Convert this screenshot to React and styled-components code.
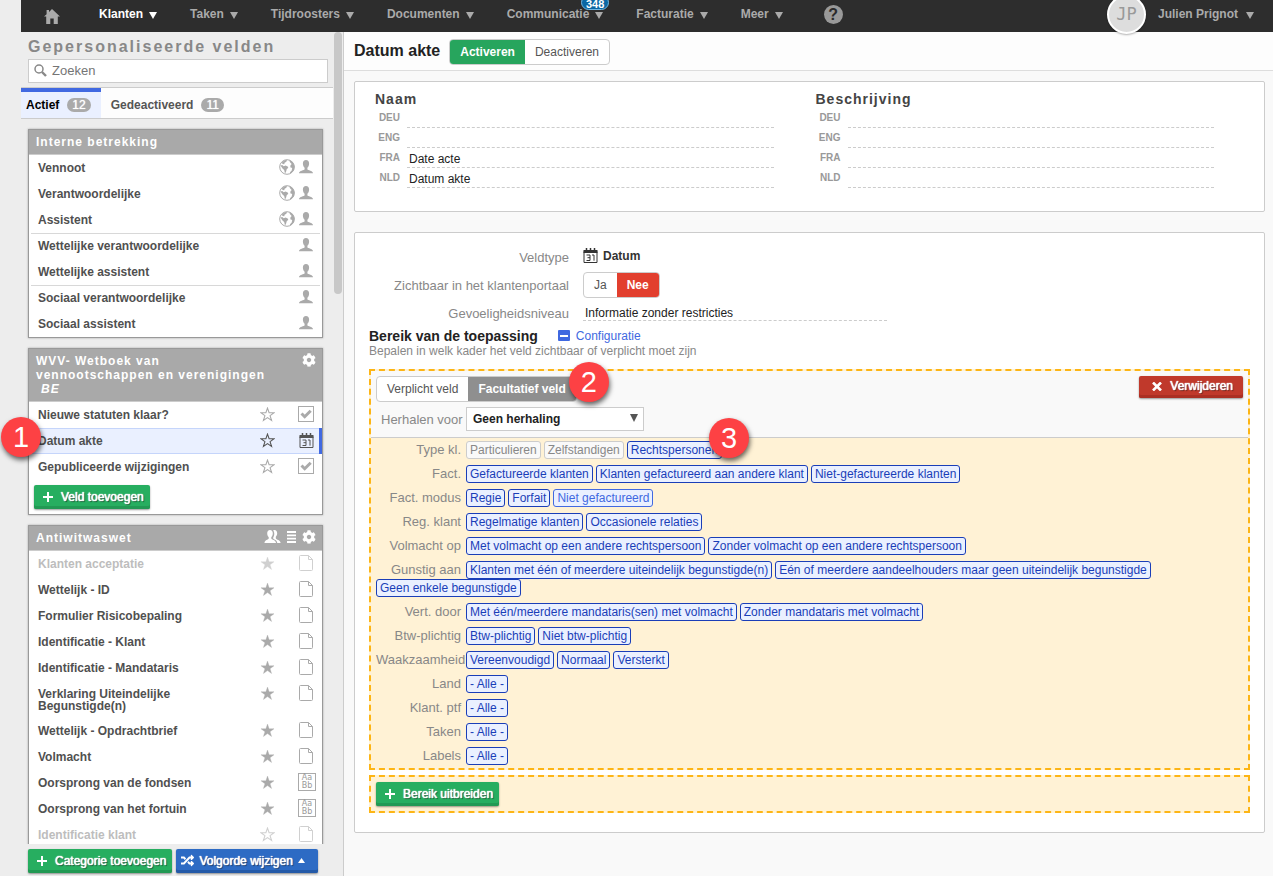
import React, { useState } from 'react';
import styled, { createGlobalStyle } from 'styled-components';
import { FaCog, FaRandom } from 'react-icons/fa';

const GlobalStyle = createGlobalStyle`
  * {
    box-sizing: border-box;
  }

  body {
    margin: 0;
    background: #ededed;
    color: #333;
    font-family: 'Liberation Sans', Arial, sans-serif;
    font-size: 12px;
  }

  button, input, select {
    font-family: inherit;
    font-size: inherit;
  }

  ul {
    margin: 0;
    padding: 0;
    list-style: none;
  }

  svg {
    display: block;
    flex: none;
  }
`;

/* ---------- layout ---------- */

const Page = styled.div`
  display: flex;
  flex-direction: column;
  height: 100vh;
`;

const Columns = styled.div`
  display: flex;
  flex: 1;
  min-height: 0;
`;

/* ---------- top navigation ---------- */

const TopBar = styled.nav`
  display: flex;
  align-items: center;
  height: 32px;
  margin-left: 21px;
  padding: 0 19px 4px 23px;
  background: #2d2d2d;
  color: #aaa;
`;

const HomeLink = styled.a`
  margin: 4px 39px 0 0;
  color: #aaa;
`;

const NavList = styled.ul`
  display: flex;
  gap: 33px;
`;

const NavLink = styled.a`
  position: relative;
  display: flex;
  align-items: center;
  gap: 6px;
  color: ${props => (props.$active ? '#fff' : '#aaa')};
  font-weight: bold;
  line-height: 16px;
  text-decoration: none;
`;

const Caret = styled.span`
  width: 0;
  height: 0;
  margin-top: 2px;
  border: 4px solid transparent;
  border-top: 7px solid currentColor;
  border-bottom: 0;
`;

const NavCount = styled.span`
  position: absolute;
  top: -11px;
  right: -6px;
  height: 15px;
  padding: 3px 4px 0;
  border: 1px solid #6fb6e2;
  border-radius: 8px;
  background: #0a67a3;
  color: #fff;
  font-size: 11px;
  line-height: 10px;
`;

const HelpButton = styled.button`
  width: 19px;
  height: 19px;
  margin-left: 41px;
  padding: 0;
  border: 0;
  border-radius: 50%;
  background: #999;
  color: #2b2b2b;
  font-size: 16px;
  font-weight: bold;
  line-height: 19px;
`;

const UserMenu = styled.div`
  display: flex;
  align-items: center;
  gap: 12px;
  margin-left: auto;
`;

const Avatar = styled.div`
  width: 39px;
  height: 39px;
  border: 2px solid #fff;
  border-radius: 50%;
  background: #ddd;
  color: #999;
  box-shadow: 0 1px 2px rgba(0, 0, 0, 0.3);
  font-family: 'DejaVu Sans Mono', monospace;
  font-size: 17px;
  line-height: 35px;
  text-align: center;
  z-index: 2;
`;

const UserLink = styled(NavLink)`
  gap: 8px;
`;

/* ---------- sidebar ---------- */

const Sidebar = styled.aside`
  display: flex;
  flex: 0 0 344px;
  border-right: 1px solid #ccc;
`;

const SidebarBody = styled.div`
  display: flex;
  flex: 1;
  flex-direction: column;
  min-width: 0;
`;

const ScrollThumb = styled.div`
  width: 8px;
  height: 31%;
  margin: 0 1px;
  border-radius: 4px;
  background: #c8c8c8;
`;

const SidebarTitle = styled.h1`
  margin: 5px 0 2px 28px;
  color: #888;
  font-size: 16px;
  letter-spacing: 2px;
  line-height: 20px;
`;

const SearchBox = styled.label`
  display: flex;
  align-items: center;
  gap: 5px;
  height: 24px;
  margin: 0 5px 4px 28px;
  padding: 0 5px 2px;
  border: 1px solid #ccc;
  background: #fff;
  color: #888;
`;

const SearchInput = styled.input`
  flex: 1;
  min-width: 0;
  padding: 0;
  border: 0;
  outline: 0;
  font-size: 13px;

  &::placeholder {
    color: #757575;
  }
`;

const TabBar = styled.div`
  display: flex;
  height: 32px;
  margin-left: 21px;
  border: 1px solid #ccc;
  border-width: 1px 0;
  background: #fdfdfd;
`;

const Tab = styled.button`
  display: flex;
  align-items: center;
  gap: 8px;
  padding: ${props => (props.$active ? '0 10px 0 5px' : '4px 10px 0')};
  border: 0;
  border-top: ${props => (props.$active ? '4px solid #4169e1' : '0')};
  background: ${props => (props.$active ? '#eaf0ff' : 'transparent')};
  color: ${props => (props.$active ? '#000' : '#555')};
  font-weight: bold;
`;

const TabCount = styled.span`
  padding: 0 5px;
  border-radius: 7px;
  background: #aaa;
  color: #fff;
  font-weight: normal;
  line-height: 14px;
  text-shadow: 0 0 1px #fff;
`;

const PanelList = styled.div`
  display: flex;
  flex: 1;
  flex-direction: column;
  gap: 10px;
  min-height: 0;
  padding: 10px 10px 0 28px;
  overflow: hidden;
`;

const Panel = styled.section`
  flex: none;
  border: 1px solid #999;
  background: #fff;
  box-shadow: 0 0 2px rgba(0, 0, 0, 0.3);
`;

const PanelHeader = styled.header`
  display: flex;
  justify-content: space-between;
  padding: 5px 6px 5px 7px;
  border-bottom: 1px solid #ccc;
  background: #a9a9a9;
  color: #fff;
`;

const PanelTitle = styled.h2`
  max-width: 236px;
  margin: 0;
  font-size: 12px;
  letter-spacing: 1px;
  line-height: 14px;

  em {
    display: block;
    padding-left: 5px;
  }
`;

const PanelTools = styled.div`
  display: flex;
  align-items: center;
  align-self: flex-start;
  gap: 6px;
  height: 12px;
`;

const Row = styled.li`
  position: relative;
  display: flex;
  align-items: flex-start;
  min-height: 26px;
  padding: 7px 8px 6px 9px;
  background: ${props =>
    props.$selected
      ? '#eaf0ff'
      : props.$divided
        ? 'linear-gradient(#d8d8d8, #d8d8d8) center top / calc(100% - 4px) 1px no-repeat'
        : 'none'};
  box-shadow: ${props =>
    props.$selected
      ? 'inset -3px 0 #4169e1, inset 0 1px #c5d5fb, inset 0 -1px #c5d5fb'
      : 'none'};
  color: ${props => (props.$selected ? '#555' : '#aaa')};
  opacity: ${props => (props.$muted ? 0.55 : 1)};
`;

const RowLink = styled.a`
  flex: 1;
  color: ${props => (props.$muted ? '#888' : '#505050')};
  font-weight: bold;
  line-height: 12px;
  text-decoration: none;
`;

const StarSlot = styled.span`
  display: flex;
  align-items: center;
  justify-content: center;
  width: 18px;
  height: 11px;
  margin-right: 22px;
`;

const TypeSlot = styled.span`
  display: flex;
  align-items: center;
  justify-content: flex-end;
  gap: 3px;
  height: 10px;
  min-width: 16px;
`;

const TextGlyph = styled.span`
  width: 18px;
  height: 18px;
  margin-right: -2px;
  border: 1px solid #aaa;
  color: #999;
  font-family: 'DejaVu Sans', sans-serif;
  font-size: 8px;
  line-height: 8px;
  text-align: center;
`;

const PanelActions = styled.div`
  padding: 5px;
`;

const SidebarFooter = styled.footer`
  display: flex;
  gap: 4px;
  padding: 5px 0 3px 28px;
`;

/* ---------- shared controls ---------- */

const tones = {
  green: ['#27ae60', '#229954'],
  blue: ['#2d6bc4', '#245aa8'],
  red: ['#c0392b', '#ab2f23'],
};

const buttonSizes = {
  regular: { height: '24px', padding: '0 6px 1px 9px', gap: '8px' },
  small: { height: '22px', padding: '0 10px 2px 13px', gap: '8px' },
  menu: { height: '24px', padding: '0 13px 1px 5px', gap: '5px' },
};

const ActionButton = styled.button`
  display: inline-flex;
  align-items: center;
  gap: ${props => buttonSizes[props.$size || 'regular'].gap};
  height: ${props => buttonSizes[props.$size || 'regular'].height};
  padding: ${props => buttonSizes[props.$size || 'regular'].padding};
  border: 0;
  border-radius: 2px;
  background: ${props => tones[props.$tone][0]};
  box-shadow: inset 0 -3px ${props => tones[props.$tone][1]}, 0 1px 2px rgba(0, 0, 0, 0.4);
  color: #fff;
  text-shadow: 0 0 1px #fff, 0 0 1px #fff, 1px 1px 1px rgba(0, 0, 0, 0.6);
  white-space: nowrap;
`;

const ToggleGroup = styled.div`
  position: relative;
  display: inline-flex;
  height: 26px;
  border: 1px solid #ccc;
  border-radius: 4px;
  background: #fff;
`;

const toggleTones = {
  green: '#27a55d',
  red: '#e23f2e',
  gray: '#8f8f8f',
};

const ToggleButton = styled.button`
  padding: 0 10px;
  border: 0;
  border-radius: ${props => (props.$last ? '0 3px 3px 0' : '3px 0 0 3px')};
  background: ${props => toggleTones[props.$tone] || 'transparent'};
  color: ${props => (props.$tone ? '#fff' : '#555')};
  font-weight: ${props => (props.$tone ? 'bold' : 'normal')};
`;

const Callout = styled.span`
  position: absolute;
  top: ${props => props.$top};
  left: ${props => props.$left};
  right: ${props => props.$right};
  z-index: 3;
  width: 40px;
  height: 40px;
  border-radius: 50%;
  background: #fd4144;
  box-shadow: 1px 3px 5px rgba(0, 0, 0, 0.6);
  color: #fff;
  font-size: 29px;
  font-weight: normal;
  line-height: 40px;
  text-align: center;
`;

/* ---------- main area ---------- */

const Main = styled.main`
  flex: 1;
  min-width: 0;
  background: #f9f9f9;
`;

const MainHeader = styled.header`
  display: flex;
  align-items: center;
  gap: 9px;
  height: 39px;
  padding: 2px 10px 0;
  border-bottom: 1px solid #ddd;
  background: #fdfdfd;
`;

const MainTitle = styled.h2`
  margin: 0;
  padding-bottom: 3px;
  color: #222;
  font-size: 16px;
  line-height: 20px;
`;

const Cards = styled.div`
  display: flex;
  flex-direction: column;
  gap: 20px;
  padding: 10px 8px 0 10px;
`;

const Card = styled.section`
  border: 1px solid #ccc;
  border-radius: 2px;
  background: #fff;
`;

const Translations = styled(Card)`
  display: flex;
  padding: 8px 8px 23px 20px;
`;

const LanguageColumn = styled.div`
  flex: 1;
  padding-right: 42px;
`;

const ColumnTitle = styled.h3`
  margin: 0;
  color: #444;
  font-size: 14px;
  letter-spacing: 1px;
  line-height: 18px;
`;

const LanguageRow = styled.label`
  display: flex;
  height: 20px;
  color: #999;
  font-size: 10px;
  font-weight: bold;
  line-height: 20px;

  span {
    width: 25px;
    margin-right: 7px;
    text-align: right;
  }
`;

const LanguageInput = styled.input`
  flex: 1;
  min-width: 0;
  padding: 2px 2px 0;
  border: 0;
  border-bottom: 1px dashed #ccc;
  outline: 0;
  background: transparent;
  color: #222;
  font-size: 12px;
`;

const Settings = styled(Card)`
  padding: 10px 14px 19px;
`;

const Field = styled.div`
  display: grid;
  grid-template-columns: 200px 1fr;
  align-items: center;
  column-gap: 14px;
  height: 28px;
`;

const FieldLabel = styled.span`
  color: #888;
  font-size: 13px;
  text-align: right;
`;

const TypeValue = styled.strong`
  display: flex;
  align-items: center;
  gap: 5px;
  padding-bottom: 3px;
`;

const LevelInput = styled.input`
  width: 304px;
  height: 16px;
  padding: 0 2px;
  border: 0;
  border-bottom: 1px dashed #ccc;
  outline: 0;
  color: #222;
`;

const ScopeHeading = styled.div`
  display: flex;
  align-items: center;
  gap: 20px;
  height: 18px;
`;

const ScopeTitle = styled.h3`
  margin: 0;
  color: #222;
  font-size: 14px;
`;

const ConfigLink = styled.a`
  display: flex;
  align-items: center;
  gap: 6px;
  color: #4169e1;
  text-decoration: none;
`;

const ScopeHint = styled.p`
  margin: 0 0 12px;
  color: #888;
  line-height: 12px;
`;

const ScopeBox = styled.div`
  margin-bottom: ${props => (props.$last ? 0 : '5px')};
  padding: ${props => (props.$last ? '5px' : 0)};
  border: 2px dashed #fdb515;
  background: #fff2d5;
`;

const ScopeToolbar = styled.div`
  display: flex;
  align-items: flex-start;
  justify-content: space-between;
  padding: 5px 5px 6px;
  border-bottom: 1px solid #ccc;
  background: #f9f9f9;
`;

const RepeatField = styled.div`
  display: flex;
  align-items: center;
  gap: 3px;
  margin-top: 5px;
  padding-left: 5px;

  label {
    min-width: 82px;
    color: #888;
    font-size: 13px;
  }
`;

const SelectWrap = styled.div`
  position: relative;
  display: flex;
  align-items: center;
  color: #555;

  &::after {
    content: '';
    position: absolute;
    top: 7px;
    right: 6px;
    border: 4px solid transparent;
    border-top: 8px solid currentColor;
    border-bottom: 0;
    pointer-events: none;
  }
`;

const Select = styled.select`
  width: 178px;
  height: 24px;
  padding: 0 6px;
  border: 1px solid #ccc;
  appearance: none;
  background: #fff;
  color: #222;
  font-weight: bold;
`;

const Criterion = styled.div`
  display: flex;
  flex-wrap: wrap;
  gap: 0 3px;
  padding: 3px 5px;
`;

const CriterionLabel = styled.span`
  width: 85px;
  margin-right: 2px;
  color: #888;
  font-size: 13px;
  line-height: 18px;
  text-align: right;
  white-space: nowrap;
`;

const tagColors = {
  on: ['#1a3eb8', '#eaf0ff'],
  soft: ['#4169e1', '#eaf0ff'],
  off: ['#888', '#f9f9f9'],
};

const Tag = styled.button`
  position: relative;
  height: 18px;
  padding: 0 3px;
  border: 1px solid ${props => (props.$state === 'off' ? '#ccc' : tagColors[props.$state][0])};
  border-radius: 3px;
  background: ${props => tagColors[props.$state][1]};
  color: ${props => tagColors[props.$state][0]};
  line-height: 16px;
`;

/* ---------- icons ---------- */

const HomeIcon = () => (
  <svg width="16" height="15" viewBox="0 0 16 15" fill="currentColor">
    <path d="M8 0 5 2.900V1H2.600v4.200L0 7.600h2.200V15h4.100V9.600h3.400V15h4.100V7.600H16z" />
  </svg>
);

const SearchIcon = () => (
  <svg width="13" height="13" viewBox="0 0 13 13" fill="none" stroke="currentColor">
    <circle cx="5" cy="5" r="4" strokeWidth="1.5" />
    <path d="m8 8 4 4" strokeWidth="2.4" />
  </svg>
);

const GlobeIcon = () => (
  <svg width="16" height="16" viewBox="0 0 16 16">
    <circle cx="8" cy="8" r="7.3" fill="#fff" stroke="currentColor" />
    <path
      fill="currentColor"
      d="M1.500 6.500 3.200 6l1.500 1.200 1.900-.6L9 7.800 9.200 9 7.800 10l-.6 2.200L6 14.800 5.200 11 3.500 9.500zM3 3.200 5.800 1.200 8 1l-.8 2-1.400.4-.6 1.800L3.400 5zM10 .9l3.700 2.200L15.600 7l-.6 4-3.400 3.400-.8-.8 1.900-2.200.5-2.400-1.900-.8.200-2L12.700 5 11 3.300z"
    />
  </svg>
);

const PersonIcon = () => (
  <svg width="16" height="14" viewBox="0 0 16 14" fill="currentColor">
    <path d="M8 0C6 0 4.900 1.400 4.900 3.500c0 1.900.7 3.300 1.700 4.200v1.500C6.400 10.400 1 10.500 1 13.200h14c0-2.700-5.400-2.800-5.600-4V7.700c1-.9 1.700-2.300 1.700-4.200C11.100 1.400 10 0 8 0z" />
  </svg>
);

const StarIcon = ({ filled }) => (
  <svg width="15" height="15" viewBox="0 0 14 14" stroke="currentColor" fill={filled ? 'currentColor' : 'none'}>
    <path
      strokeWidth={filled ? 0.3 : 1}
      d="m7 1 1.500 4.400h4.600L9.400 8.100l1.400 4.500L7 9.900l-3.800 2.700 1.400-4.500L.9 5.400h4.600z"
    />
  </svg>
);

const CheckIcon = () => (
  <svg width="16" height="16" viewBox="0 0 16 16" fill="none" stroke="currentColor">
    <rect x="0.5" y="0.5" width="15" height="15" />
    <path d="m3.500 7.500 3.200 3.200 6-6" strokeWidth="3" />
  </svg>
);

const CalendarIcon = () => (
  <svg width="15" height="15" viewBox="0 0 15 15" fill="none" stroke="currentColor">
    <path d="M1 3.500h13v11H1z" />
    <path d="M.5 3.500h14" strokeWidth="3" />
    <path d="M3.500 0v3M7.500 0v3M11.500 0v3" strokeWidth="1.5" />
    <path d="M3.500 7h3.500v5.500H3.500M4.500 9.700H7M9 7h2v5.700" />
  </svg>
);

const FileIcon = () => (
  <svg width="16" height="16" viewBox="0 0 16 16" fill="none" stroke="currentColor">
    <path d="M2.500.5h8l4 4v10a1 1 0 0 1-1 1h-11a1 1 0 0 1-1-1v-13a1 1 0 0 1 1-1zM10.500.5v4h4" />
  </svg>
);

const GroupIcon = () => (
  <svg width="17" height="14" viewBox="0 0 17 14" fill="currentColor">
    <path d="M6 0C4.200 0 3.200 1.300 3.200 3.200c0 1.700.6 3 1.500 3.900v1.500C4.500 10 .5 10 .5 13H12c0-3-4.500-3-4.700-4.400V7.100c.9-.9 1.500-2.200 1.500-3.900C8.800 1.300 7.800 0 6 0z" />
    <path d="M9.200.3c2.500-.8 4 .6 4 3 0 1.600-.6 2.700-1.400 3.500v1.400c.3 1.600 4.800 1.600 4.800 4.800h-3.400c0-2.700-3.300-3.300-4-4.400V7.400c1.400-2 1.500-4.800 0-7.100z" />
  </svg>
);

const ListIcon = () => (
  <svg width="9" height="12" viewBox="0 0 9 12" stroke="currentColor" strokeWidth="1.8">
    <path d="M0 1h9M0 4.300h9M0 7.600h9M0 11h9" />
  </svg>
);

const PlusIcon = () => (
  <svg width="10" height="10" viewBox="0 0 10 10" stroke="currentColor" strokeWidth="2">
    <path d="M5 0v10M0 5h10" />
  </svg>
);

const CrossIcon = () => (
  <svg width="10" height="9" viewBox="0 0 10 9" stroke="currentColor" strokeWidth="2.6">
    <path d="m1 .5 8 8M9 .5l-8 8" />
  </svg>
);

const UpIcon = () => (
  <svg width="7" height="5" viewBox="0 0 7 5" fill="currentColor">
    <path d="M3.500 0 7 5H0z" />
  </svg>
);

const MinusBoxIcon = () => (
  <svg width="12" height="12" viewBox="0 0 12 12">
    <rect width="12" height="11" rx="1" fill="#3f68e0" />
    <path d="M2 6h8" stroke="#fff" strokeWidth="2" />
  </svg>
);

/* ---------- data ---------- */

const navItems = ['Klanten', 'Taken', 'Tijdroosters', 'Documenten', 'Communicatie', 'Facturatie', 'Meer'];

const relations = [
  { name: 'Vennoot', globe: true },
  { name: 'Verantwoordelijke', globe: true },
  { name: 'Assistent', globe: true },
  { name: 'Wettelijke verantwoordelijke', divided: true },
  { name: 'Wettelijke assistent' },
  { name: 'Sociaal verantwoordelijke', divided: true },
  { name: 'Sociaal assistent' },
];

const wvvFields = [
  { name: 'Nieuwe statuten klaar?', type: 'check' },
  { name: 'Datum akte', type: 'date', callout: 1 },
  { name: 'Gepubliceerde wijzigingen', type: 'check' },
];

const amlFields = [
  { name: 'Klanten acceptatie', type: 'file', star: true, muted: true },
  { name: 'Wettelijk - ID', type: 'file', star: true },
  { name: 'Formulier Risicobepaling', type: 'file', star: true },
  { name: 'Identificatie - Klant', type: 'file', star: true },
  { name: 'Identificatie - Mandataris', type: 'file', star: true },
  { name: 'Verklaring Uiteindelijke Begunstigde(n)', type: 'file', star: true },
  { name: 'Wettelijk - Opdrachtbrief', type: 'file', star: true },
  { name: 'Volmacht', type: 'file', star: true },
  { name: 'Oorsprong van de fondsen', type: 'text', star: true },
  { name: 'Oorsprong van het fortuin', type: 'text', star: true },
  { name: 'Identificatie klant', type: 'file', muted: true },
];

const languages = ['DEU', 'ENG', 'FRA', 'NLD'];
const names = { FRA: 'Date acte', NLD: 'Datum akte' };

const criteria = [
  { label: 'Type kl.', tags: ['Particulieren', 'Zelfstandigen', 'Rechtspersonen'], off: ['Particulieren', 'Zelfstandigen'], callout: 3 },
  { label: 'Fact.', tags: ['Gefactureerde klanten', 'Klanten gefactureerd aan andere klant', 'Niet-gefactureerde klanten'] },
  { label: 'Fact. modus', tags: ['Regie', 'Forfait', 'Niet gefactureerd'], soft: ['Niet gefactureerd'] },
  { label: 'Reg. klant', tags: ['Regelmatige klanten', 'Occasionele relaties'] },
  { label: 'Volmacht op', tags: ['Met volmacht op een andere rechtspersoon', 'Zonder volmacht op een andere rechtspersoon'] },
  {
    label: 'Gunstig aan',
    tags: [
      'Klanten met één of meerdere uiteindelijk begunstigde(n)',
      'Eén of meerdere aandeelhouders maar geen uiteindelijk begunstigde',
      'Geen enkele begunstigde',
    ],
  },
  { label: 'Vert. door', tags: ['Met één/meerdere mandataris(sen) met volmacht', 'Zonder mandataris met volmacht'] },
  { label: 'Btw-plichtig', tags: ['Btw-plichtig', 'Niet btw-plichtig'] },
  { label: 'Waakzaamheid', tags: ['Vereenvoudigd', 'Normaal', 'Versterkt'] },
  { label: 'Land', tags: ['- Alle -'] },
  { label: 'Klant. ptf', tags: ['- Alle -'] },
  { label: 'Taken', tags: ['- Alle -'] },
  { label: 'Labels', tags: ['- Alle -'] },
];

/* ---------- components ---------- */

const Toggle = ({ label, options, value, tone, onChange, children }) => (
  <ToggleGroup role="group" aria-label={label}>
    {options.map((option, index) => (
      <ToggleButton
        key={option}
        type="button"
        aria-pressed={option === value}
        $tone={option === value ? tone : undefined}
        $last={index === options.length - 1}
        onClick={() => onChange(option)}
      >
        {option}
      </ToggleButton>
    ))}
    {children}
  </ToggleGroup>
);

const TypeIcon = ({ type }) => {
  if (type === 'check') return <CheckIcon />;
  if (type === 'date') return <CalendarIcon />;
  if (type === 'text') return <TextGlyph>Aa<br />Bb</TextGlyph>;
  return <FileIcon />;
};

const FieldRow = ({ field, selected, onSelect }) => (
  <Row $selected={selected} $muted={field.muted}>
    <RowLink href="#" $muted={field.muted} onClick={() => onSelect(field.name)}>
      {field.name}
    </RowLink>
    <StarSlot>
      <StarIcon filled={field.star} />
    </StarSlot>
    <TypeSlot>
      <TypeIcon type={field.type} />
    </TypeSlot>
    {field.callout && <Callout $top="-11px" $left="-28px">{field.callout}</Callout>}
  </Row>
);

const Criteria = ({ item }) => {
  const stateOf = tag => {
    if (item.off?.includes(tag)) return 'off';
    if (item.soft?.includes(tag)) return 'soft';
    return 'on';
  };

  return (
    <Criterion role="group" aria-label={item.label}>
      <CriterionLabel>{item.label}</CriterionLabel>
      {item.tags.map((tag, index) => (
        <Tag key={tag} type="button" $state={stateOf(tag)}>
          {tag}
          {item.callout && index === item.tags.length - 1 && (
            <Callout $top="-24px" $right="-28px">{item.callout}</Callout>
          )}
        </Tag>
      ))}
    </Criterion>
  );
};

const LanguageFields = ({ title, values }) => (
  <LanguageColumn>
    <ColumnTitle>{title}</ColumnTitle>
    {languages.map(code => (
      <LanguageRow key={code}>
        <span>{code}</span>
        <LanguageInput type="text" defaultValue={values[code] || ''} />
      </LanguageRow>
    ))}
  </LanguageColumn>
);

const App = () => {
  const [selected, setSelected] = useState('Datum akte');
  const [status, setStatus] = useState('Activeren');
  const [portal, setPortal] = useState('Nee');
  const [required, setRequired] = useState('Facultatief veld');

  return (
    <Page>
      <GlobalStyle />
      <TopBar>
        <HomeLink href="#" aria-label="Home">
          <HomeIcon />
        </HomeLink>
        <NavList>
          {navItems.map(item => (
            <li key={item}>
              <NavLink href="#" $active={item === 'Klanten'}>
                {item}
                <Caret />
                {item === 'Communicatie' && <NavCount>348</NavCount>}
              </NavLink>
            </li>
          ))}
        </NavList>
        <HelpButton type="button">?</HelpButton>
        <UserMenu>
          <Avatar>JP</Avatar>
          <UserLink href="#">
            Julien Prignot
            <Caret />
          </UserLink>
        </UserMenu>
      </TopBar>

      <Columns>
        <Sidebar>
          <SidebarBody>
            <SidebarTitle>Gepersonaliseerde velden</SidebarTitle>
            <SearchBox>
              <SearchIcon />
              <SearchInput type="search" placeholder="Zoeken" aria-label="Zoeken" />
            </SearchBox>
            <TabBar>
              <Tab type="button" $active>
                Actief <TabCount>12</TabCount>
              </Tab>
              <Tab type="button">
                Gedeactiveerd <TabCount>11</TabCount>
              </Tab>
            </TabBar>

            <PanelList>
              <Panel>
                <PanelHeader>
                  <PanelTitle>Interne betrekking</PanelTitle>
                </PanelHeader>
                <ul>
                  {relations.map(relation => (
                    <Row key={relation.name} $divided={relation.divided}>
                      <RowLink href="#">{relation.name}</RowLink>
                      <TypeSlot>
                        {relation.globe && <GlobeIcon />}
                        <PersonIcon />
                      </TypeSlot>
                    </Row>
                  ))}
                </ul>
              </Panel>

              <Panel>
                <PanelHeader>
                  <PanelTitle>
                    WVV- Wetboek van vennootschappen en verenigingen
                    <em>BE</em>
                  </PanelTitle>
                  <PanelTools>
                    <FaCog size={14} />
                  </PanelTools>
                </PanelHeader>
                <ul>
                  {wvvFields.map(field => (
                    <FieldRow
                      key={field.name}
                      field={field}
                      selected={field.name === selected}
                      onSelect={setSelected}
                    />
                  ))}
                </ul>
                <PanelActions>
                  <ActionButton type="button" $tone="green">
                    <PlusIcon />
                    Veld toevoegen
                  </ActionButton>
                </PanelActions>
              </Panel>

              <Panel>
                <PanelHeader>
                  <PanelTitle>Antiwitwaswet</PanelTitle>
                  <PanelTools>
                    <GroupIcon />
                    <ListIcon />
                    <FaCog size={14} />
                  </PanelTools>
                </PanelHeader>
                <ul>
                  {amlFields.map(field => (
                    <FieldRow
                      key={field.name}
                      field={field}
                      selected={field.name === selected}
                      onSelect={setSelected}
                    />
                  ))}
                </ul>
              </Panel>
            </PanelList>

            <SidebarFooter>
              <ActionButton type="button" $tone="green">
                <PlusIcon />
                Categorie toevoegen
              </ActionButton>
              <ActionButton type="button" $tone="blue" $size="menu">
                <FaRandom size={13} />
                Volgorde wijzigen
                <UpIcon />
              </ActionButton>
            </SidebarFooter>
          </SidebarBody>
          <ScrollThumb />
        </Sidebar>

        <Main>
          <MainHeader>
            <MainTitle>Datum akte</MainTitle>
            <Toggle
              label="Status"
              options={['Activeren', 'Deactiveren']}
              value={status}
              tone="green"
              onChange={setStatus}
            />
          </MainHeader>

          <Cards>
            <Translations>
              <LanguageFields title="Naam" values={names} />
              <LanguageFields title="Beschrijving" values={{}} />
            </Translations>

            <Settings>
              <Field>
                <FieldLabel>Veldtype</FieldLabel>
                <TypeValue>
                  <CalendarIcon />
                  Datum
                </TypeValue>
              </Field>
              <Field>
                <FieldLabel>Zichtbaar in het klantenportaal</FieldLabel>
                <div>
                  <Toggle
                    label="Zichtbaar in het klantenportaal"
                    options={['Ja', 'Nee']}
                    value={portal}
                    tone="red"
                    onChange={setPortal}
                  />
                </div>
              </Field>
              <Field>
                <FieldLabel as="label" htmlFor="level">Gevoeligheidsniveau</FieldLabel>
                <LevelInput id="level" type="text" defaultValue="Informatie zonder restricties" />
              </Field>

              <ScopeHeading>
                <ScopeTitle>Bereik van de toepassing</ScopeTitle>
                <ConfigLink href="#">
                  <MinusBoxIcon />
                  Configuratie
                </ConfigLink>
              </ScopeHeading>
              <ScopeHint>Bepalen in welk kader het veld zichtbaar of verplicht moet zijn</ScopeHint>

              <ScopeBox>
                <ScopeToolbar>
                  <div>
                    <Toggle
                      label="Verplichting"
                      options={['Verplicht veld', 'Facultatief veld']}
                      value={required}
                      tone="gray"
                      onChange={setRequired}
                    >
                      <Callout $top="-15px" $right="-33px">2</Callout>
                    </Toggle>
                    <RepeatField>
                      <label htmlFor="repeat">Herhalen voor</label>
                      <SelectWrap>
                        <Select id="repeat">
                          <option>Geen herhaling</option>
                        </Select>
                      </SelectWrap>
                    </RepeatField>
                  </div>
                  <ActionButton type="button" $tone="red" $size="small">
                    <CrossIcon />
                    Verwijderen
                  </ActionButton>
                </ScopeToolbar>
                {criteria.map(item => (
                  <Criteria key={item.label} item={item} />
                ))}
              </ScopeBox>

              <ScopeBox $last>
                <ActionButton type="button" $tone="green">
                  <PlusIcon />
                  Bereik uitbreiden
                </ActionButton>
              </ScopeBox>
            </Settings>
          </Cards>
        </Main>
      </Columns>
    </Page>
  );
};

export default App;
